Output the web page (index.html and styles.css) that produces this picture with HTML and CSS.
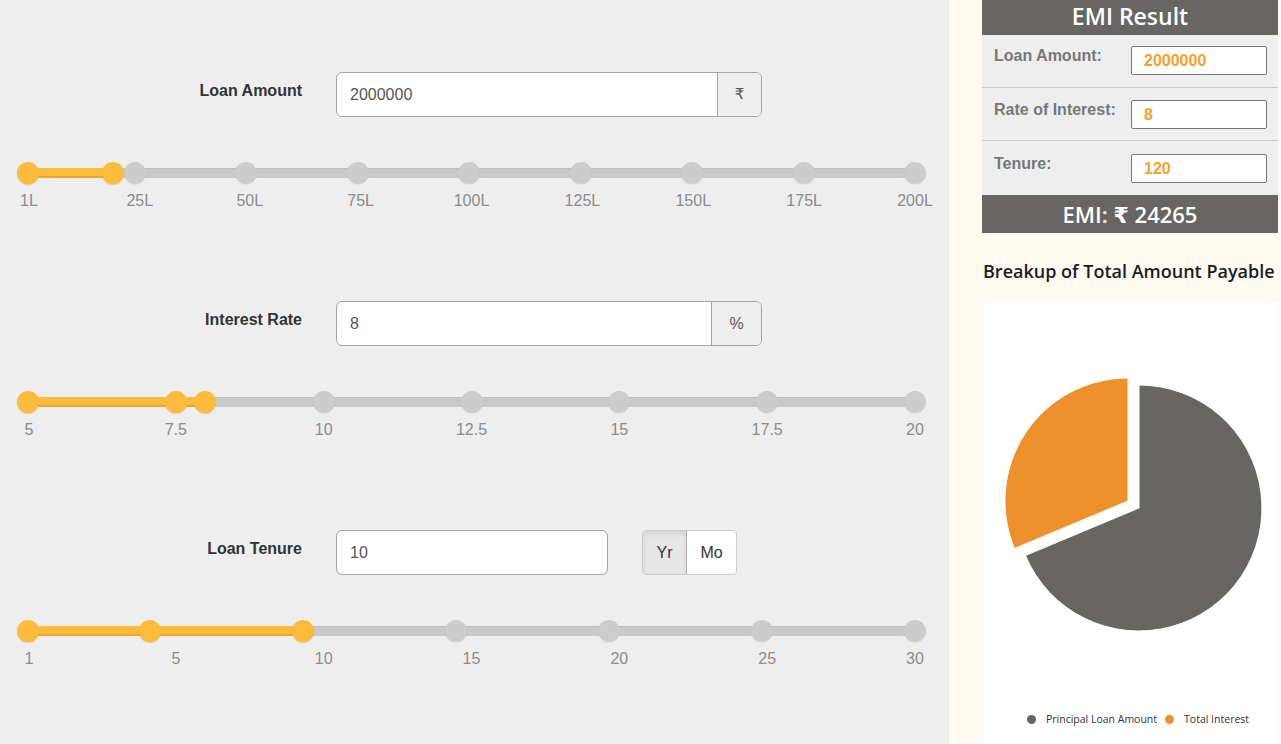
FILE: index.html
```html
<!DOCTYPE html>
<html>
<head>
<meta charset="utf-8">
<title>EMI Calculator</title>
<link rel="stylesheet" href="styles.css">
</head>
<body>
<div class="page">
  <main class="calc">
    <section class="section">
      <div class="field">
        <label class="field-label">Loan Amount</label>
        <div class="input-group ig-amount">
          <span class="input-text">2000000</span>
          <span class="addon addon-rupee">₹</span>
        </div>
      </div>
      <div class="slider">
        <div class="track"></div>
        <div class="fill" style="width:9.548%"></div>
        <span class="dot on" style="left:0%"></span>
        <span class="dot" style="left:12.06%"></span>
        <span class="dot" style="left:24.62%"></span>
        <span class="dot" style="left:37.19%"></span>
        <span class="dot" style="left:49.75%"></span>
        <span class="dot" style="left:62.31%"></span>
        <span class="dot" style="left:74.87%"></span>
        <span class="dot" style="left:87.44%"></span>
        <span class="dot" style="left:100%"></span>
        <span class="dot on" style="left:9.548%"></span>
      </div>
      <div class="scale">
        <span style="left:0.1%">1L</span>
        <span style="left:12.6%">25L</span>
        <span style="left:25%">50L</span>
        <span style="left:37.5%">75L</span>
        <span style="left:50%">100L</span>
        <span style="left:62.5%">125L</span>
        <span style="left:75%">150L</span>
        <span style="left:87.5%">175L</span>
        <span style="left:100%">200L</span>
      </div>
    </section>

    <section class="section">
      <div class="field">
        <label class="field-label">Interest Rate</label>
        <div class="input-group ig-amount">
          <span class="input-text">8</span>
          <span class="addon addon-pct">%</span>
        </div>
      </div>
      <div class="slider">
        <div class="track"></div>
        <div class="fill" style="width:20%"></div>
        <span class="dot on" style="left:0%"></span>
        <span class="dot on" style="left:16.667%"></span>
        <span class="dot" style="left:33.333%"></span>
        <span class="dot" style="left:50%"></span>
        <span class="dot" style="left:66.667%"></span>
        <span class="dot" style="left:83.333%"></span>
        <span class="dot" style="left:100%"></span>
        <span class="dot on" style="left:20%"></span>
      </div>
      <div class="scale">
        <span style="left:0.1%">5</span>
        <span style="left:16.667%">7.5</span>
        <span style="left:33.333%">10</span>
        <span style="left:50%">12.5</span>
        <span style="left:66.667%">15</span>
        <span style="left:83.333%">17.5</span>
        <span style="left:100%">20</span>
      </div>
    </section>

    <section class="section">
      <div class="field">
        <label class="field-label">Loan Tenure</label>
        <div class="input-group ig-tenure">
          <span class="input-text">10</span>
        </div>
        <div class="btn-group">
          <span class="btn active">Yr</span>
          <span class="btn">Mo</span>
        </div>
      </div>
      <div class="slider">
        <div class="track"></div>
        <div class="fill" style="width:31.03%"></div>
        <span class="dot on" style="left:0%"></span>
        <span class="dot on" style="left:13.79%"></span>
        <span class="dot" style="left:48.28%"></span>
        <span class="dot" style="left:65.52%"></span>
        <span class="dot" style="left:82.76%"></span>
        <span class="dot" style="left:100%"></span>
        <span class="dot on" style="left:31.03%"></span>
      </div>
      <div class="scale">
        <span style="left:0.1%">1</span>
        <span style="left:16.667%">5</span>
        <span style="left:33.333%">10</span>
        <span style="left:50%">15</span>
        <span style="left:66.667%">20</span>
        <span style="left:83.333%">25</span>
        <span style="left:100%">30</span>
      </div>
    </section>
  </main>

  <aside class="result">
    <div class="result-head">EMI Result</div>
    <div class="result-row r1">
      <span class="result-label">Loan Amount:</span>
      <span class="result-box">2000000</span>
    </div>
    <div class="result-row r2">
      <span class="result-label">Rate of Interest:</span>
      <span class="result-box">8</span>
    </div>
    <div class="result-row r3">
      <span class="result-label">Tenure:</span>
      <span class="result-box">120</span>
    </div>
    <div class="emi-bar">EMI: ₹ 24265</div>
    <h2 class="breakup">Breakup of Total Amount Payable</h2>
    <div class="chart">
      <svg class="pie" width="296" height="410" viewBox="0 0 296 410">
        <path d="M157 206 L157 83 A123 123 0 1 1 43.5 253.5 Z" fill="#686662" stroke="#ffffff" stroke-width="1" stroke-linejoin="round"/>
        <path d="M146 199 L32.5 246.5 A123 123 0 0 1 146 76 Z" fill="#ed8f2b" stroke="#ffffff" stroke-width="1" stroke-linejoin="round"/>
      </svg>
      <div class="legend">
        <span class="legend-item"><i class="ldot ldot-gray"></i>Principal Loan Amount</span>
        <span class="legend-item"><i class="ldot ldot-orange"></i>Total Interest</span>
      </div>
    </div>
  </aside>
</div>
</body>
</html>
```

FILE: styles.css
```css
html, body {
  margin: 0;
  padding: 0;
}
body {
  background: #fffaf1;
  font-family: "Liberation Sans", Arial, sans-serif;
  overflow: hidden;
}
.page {
  display: flex;
  align-items: flex-start;
  width: 1281px;
  height: 744px;
}

/* ---------- left calculator ---------- */
.calc {
  width: 949px;
  height: 744px;
  background: #eeeeee;
  padding-top: 72px;
  box-sizing: border-box;
  flex-shrink: 0;
}
.section + .section {
  margin-top: 91px;
}
.field {
  display: flex;
  align-items: flex-start;
  height: 45px;
}
.field-label {
  width: 302px;
  margin-right: 34px;
  text-align: right;
  font-weight: bold;
  font-size: 16px;
  line-height: 20px;
  padding-top: 9px;
  color: #333333;
}
.input-group {
  display: flex;
  height: 45px;
  box-sizing: border-box;
  border: 1px solid #a3a3a3;
  border-radius: 6px;
  background: #ffffff;
  overflow: hidden;
}
.ig-amount {
  width: 426px;
}
.ig-tenure {
  width: 272px;
}
.input-text {
  flex: 1;
  padding-left: 13px;
  font-size: 16px;
  line-height: 43px;
  color: #555555;
}
.addon {
  background: #eeeeee;
  border-left: 1px solid #a3a3a3;
  text-align: center;
  font-size: 16px;
  line-height: 43px;
  color: #555555;
  font-family: "DejaVu Sans", "Liberation Sans", sans-serif;
}
.addon-rupee {
  width: 43px;
  font-size: 15px;
}
.addon-pct {
  width: 49px;
  font-family: "Liberation Sans", Arial, sans-serif;
}
.btn-group {
  display: flex;
  margin-left: 34px;
  height: 45px;
  box-sizing: border-box;
  border: 1px solid #cccccc;
  border-radius: 4px;
  overflow: hidden;
  background: #ffffff;
}
.btn {
  font-size: 16px;
  line-height: 43px;
  color: #333333;
  text-align: center;
}
.btn.active {
  width: 43px;
  background: #e6e6e6;
  border-right: 1px solid #adadad;
  box-shadow: inset 0 3px 5px rgba(0, 0, 0, 0.08);
}
.btn + .btn {
  width: 49px;
}

/* slider */
.slider {
  position: relative;
  width: 887px;
  height: 22px;
  margin: 45px 0 0 28px;
}
.track {
  position: absolute;
  left: 0;
  right: 0;
  top: 6px;
  height: 10px;
  background: #c9c9c9;
  box-shadow: inset 0 1px 1px rgba(0, 0, 0, 0.06);
}
.fill {
  position: absolute;
  left: 0;
  top: 6px;
  height: 10px;
  background: #fdbb3c;
  box-shadow: inset 0 -2px 0 #eaa632;
}
.dot {
  position: absolute;
  top: 0;
  width: 22px;
  height: 22px;
  margin-left: -11px;
  border-radius: 50%;
  background: #cccccc;
  box-shadow: 0 1px 1px rgba(0, 0, 0, 0.06);
}
.dot.on {
  background: #fdbb3c;
  box-shadow: 0 1px 1px rgba(200, 130, 20, 0.35);
}
.scale {
  position: relative;
  width: 887px;
  height: 18px;
  margin: 8px 0 0 28px;
}
.scale span {
  position: absolute;
  top: 0;
  transform: translateX(-50%);
  font-size: 16px;
  line-height: 18px;
  color: #8b8b8b;
  white-space: nowrap;
}

/* ---------- right result panel ---------- */
.result {
  width: 296px;
  margin-left: 33px;
  flex-shrink: 0;
}
.result-head {
  height: 35px;
  background: #686662;
  color: #ffffff;
  text-align: center;
  font-family: "Open Sans", sans-serif;
  font-weight: 600;
  font-size: 23px;
  line-height: 33px;
}
.result-row {
  display: flex;
  align-items: flex-start;
  height: 53px;
  box-sizing: border-box;
  padding: 11px 0 0 12px;
  background: #eeeeee;
  border-bottom: 1px solid #cccccc;
}
.result-row.r2 {
  padding-top: 12px;
}
.result-row.r3 {
  height: 54px;
  padding-top: 13px;
  border-bottom: 0;
}
.result-label {
  width: 137px;
  font-weight: bold;
  font-size: 16px;
  line-height: 20px;
  color: #777777;
  white-space: nowrap;
}
.result-box {
  width: 136px;
  height: 29px;
  box-sizing: border-box;
  border: 1px solid #777777;
  border-radius: 2px;
  background: #ffffff;
  padding-left: 12px;
  font-weight: bold;
  font-size: 16px;
  line-height: 27px;
  color: #f6a02a;
}
.emi-bar {
  height: 38px;
  background: #686662;
  color: #ffffff;
  text-align: center;
  font-family: "Open Sans", "DejaVu Sans", sans-serif;
  font-weight: 600;
  font-size: 22px;
  line-height: 38px;
}
.breakup {
  margin: 26px 0 19px 1px;
  font-family: "Open Sans", sans-serif;
  font-weight: 600;
  font-size: 18px;
  line-height: 24px;
  color: #1c1c24;
  white-space: nowrap;
}
.chart {
  background: #ffffff;
  height: 460px;
}
.pie {
  display: block;
}
.legend {
  display: flex;
  justify-content: center;
  gap: 8px;
  padding-left: 16px;
  font-family: "Open Sans", sans-serif;
  font-size: 10.5px;
  line-height: 14px;
  color: #333333;
}
.legend-item {
  display: flex;
  align-items: center;
}
.ldot {
  display: inline-block;
  width: 9px;
  height: 9px;
  border-radius: 50%;
  margin-right: 10px;
}
.ldot-gray {
  background: #686662;
}
.ldot-orange {
  background: #ed8f2b;
}
```
